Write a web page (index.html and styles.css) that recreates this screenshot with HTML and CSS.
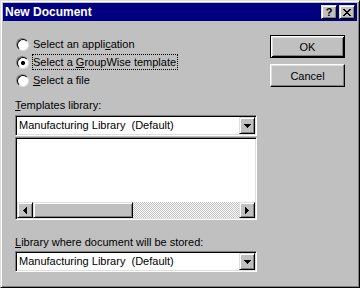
FILE: index.html
```html
<!DOCTYPE html>
<html lang="en">
<head>
  <meta charset="UTF-8">
  <meta name="viewport" content="width=device-width, initial-scale=1.0">
  <title>New Document</title>
  <link rel="stylesheet" href="styles.css">
</head>
<body>

<div class="window">
  <!-- Caption -->
  <div class="titlebar">
    <span class="title">New Document</span>
    <button class="tbtn help" type="button">?</button>
    <button class="tbtn close" type="button">
      <svg width="8" height="7" viewBox="0 0 8 7"><path d="M0 0h2v1H0zM6 0h2v1H6zM1 1h2v1H1zM5 1h2v1H5zM2 2h4v1H2zM3 3h2v1H3zM2 4h4v1H2zM1 5h2v1H1zM5 5h2v1H5zM0 6h2v1H0zM6 6h2v1H6z" fill="#000"/></svg>
    </button>
  </div>

  <div class="content">
    <div class="main">
      <!-- Source options -->
      <div class="options">
        <label class="option"><span class="radio"></span><span class="text">Select an appli<u>c</u>ation</span></label>
        <label class="option"><span class="radio checked"></span><span class="text focus">Select a <u>G</u>roupWise template</span></label>
        <label class="option"><span class="radio"></span><span class="text"><u>S</u>elect a file</span></label>
      </div>

      <div class="field-label"><u>T</u>emplates library:</div>
      <div class="combo">
        <div class="combo-value">Manufacturing Library  (Default)</div>
        <div class="combo-btn">
          <svg width="7" height="4" viewBox="0 0 7 4"><path d="M0 0h7v1H0zM1 1h5v1H1zM2 2h3v1H2zM3 3h1v1H3z" fill="#000"/></svg>
        </div>
      </div>

      <div class="listbox">
        <div class="list-items"></div>
        <div class="hscroll">
          <div class="sb-btn">
            <svg width="4" height="7" viewBox="0 0 4 7"><path d="M3 0h1v7H3zM2 1h1v5H2zM1 2h1v3H1zM0 3h1v1H0z" fill="#000"/></svg>
          </div>
          <div class="sb-thumb"></div>
          <div class="sb-track"></div>
          <div class="sb-btn">
            <svg width="4" height="7" viewBox="0 0 4 7"><path d="M0 0h1v7H0zM1 1h1v5H1zM2 2h1v3H2zM3 3h1v1H3z" fill="#000"/></svg>
          </div>
        </div>
      </div>

      <div class="field-label second"><u>L</u>ibrary where document will be stored:</div>
      <div class="combo combo-last">
        <div class="combo-value">Manufacturing Library  (Default)</div>
        <div class="combo-btn">
          <svg width="7" height="4" viewBox="0 0 7 4"><path d="M0 0h7v1H0zM1 1h5v1H1zM2 2h3v1H2zM3 3h1v1H3z" fill="#000"/></svg>
        </div>
      </div>
    </div>

    <div class="actions">
      <button class="btn default" type="button">OK</button>
      <button class="btn" type="button">Cancel</button>
    </div>
  </div>
</div>

</body>
</html>
```

FILE: styles.css
```css
/* General Styles */
* {
  box-sizing: border-box;
}
body {
  margin: 0;
  background: #c0c0c0;
  font-family: "Liberation Sans", Arial, sans-serif;
  font-size: 11px;
  color: #000;
}

/* Window frame */
.window {
  width: 360px;
  height: 288px;
  padding: 2px;
  background: #c0c0c0;
  border: 1px solid;
  border-color: #dfdfdf #000 #000 #dfdfdf;
  box-shadow: inset 1px 1px #fff, inset -1px -1px #808080;
}
.titlebar {
  display: flex;
  align-items: center;
  height: 18px;
  padding: 0 2px 0 2px;
  background: #000080;
}
.title {
  flex: 1;
  color: #fff;
  font-weight: bold;
  font-size: 12px;
  line-height: 18px;
}
.tbtn {
  display: flex;
  align-items: center;
  justify-content: center;
  width: 16px;
  height: 14px;
  padding: 0;
  background: #c0c0c0;
  border: 1px solid;
  border-color: #dfdfdf #000 #000 #dfdfdf;
  box-shadow: inset 1px 1px #fff, inset -1px -1px #808080;
  font-family: "Liberation Sans", Arial, sans-serif;
  font-weight: bold;
  font-size: 11px;
  line-height: 12px;
  color: #000;
}
.tbtn.close {
  margin-left: 2px;
}

/* Body */
.content {
  display: flex;
  padding: 14px 12px 0 12px;
}
.main {
  width: 242px;
}
.actions {
  display: flex;
  flex-direction: column;
  gap: 6px;
  width: 75px;
  margin-left: 13px;
}

/* Radio options */
.option {
  display: flex;
  align-items: center;
  height: 18px;
}
.radio {
  flex: none;
  width: 12px;
  height: 12px;
  margin-left: 1px;
  margin-right: 4px;
  border-radius: 50%;
  border: 1px solid;
  border-color: #808080 #fff #fff #808080;
}
.radio::before {
  content: "";
  display: block;
  width: 10px;
  height: 10px;
  border-radius: 50%;
  border: 1px solid;
  border-color: #000 #dfdfdf #dfdfdf #000;
  background: #fff;
}
.radio.checked::before {
  background: radial-gradient(circle, #000 0 2px, #fff 2.2px);
}
.option .text {
  padding: 0 1px 0 0;
  border: 1px solid transparent;
  line-height: 14px;
}
.option .text.focus {
  border: 1px dotted #000;
}

/* Fields */
.field-label {
  margin-top: 10px;
  line-height: 13px;
}
.field-label.second {
  margin-top: 16px;
}
.combo,
.listbox {
  width: 242px;
  padding: 1px;
  background: #fff;
  border: 1px solid;
  border-color: #808080 #fff #fff #808080;
  box-shadow: inset 1px 1px #000, inset -1px -1px #dfdfdf;
}
.combo {
  display: flex;
  height: 21px;
  margin-top: 3px;
}
.combo-last {
  margin-top: 2px;
}
.combo-value {
  flex: 1;
  padding-left: 2px;
  line-height: 16px;
  white-space: pre;
}
.combo-btn,
.sb-btn,
.sb-thumb {
  background: #c0c0c0;
  border: 1px solid;
  border-color: #dfdfdf #000 #000 #dfdfdf;
  box-shadow: inset 1px 1px #fff, inset -1px -1px #808080;
}
.combo-btn {
  display: flex;
  align-items: center;
  justify-content: center;
  width: 16px;
  height: 17px;
}
.listbox {
  display: flex;
  flex-direction: column;
  height: 83px;
  margin-top: 1px;
}
.list-items {
  flex: 1;
}
.hscroll {
  display: flex;
  height: 16px;
}
.sb-btn {
  display: flex;
  align-items: center;
  justify-content: center;
  width: 16px;
  height: 16px;
}
.sb-thumb {
  width: 100px;
  height: 16px;
}
.sb-track {
  flex: 1;
  background-color: #fff;
  background-image: repeating-conic-gradient(#c0c0c0 0 25%, #fff 0 50%);
  background-size: 2px 2px;
}

/* Push buttons */
.btn {
  height: 23px;
  padding: 0;
  background: #c0c0c0;
  border: 1px solid;
  border-color: #fff #000 #000 #fff;
  box-shadow: inset -1px -1px #808080, inset 1px 1px #dfdfdf;
  font-family: "Liberation Sans", Arial, sans-serif;
  font-size: 11px;
  color: #000;
}
.btn.default {
  border-color: #000;
  box-shadow: inset 1px 1px #fff, inset -1px -1px #000, inset 2px 2px #dfdfdf, inset -2px -2px #808080;
}
```
